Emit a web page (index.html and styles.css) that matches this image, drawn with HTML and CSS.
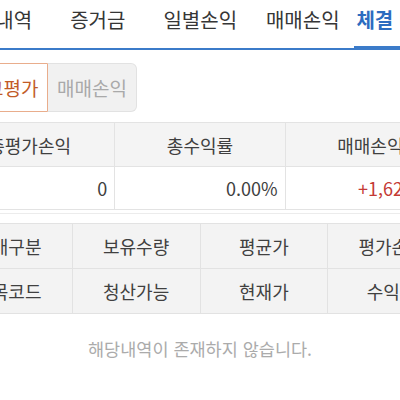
FILE: index.html
```html
<!DOCTYPE html>
<html lang="ko">
<head>
<meta charset="utf-8">
<link rel="stylesheet" href="styles.css">
</head>
<body>
<div class="page">
  <nav class="tabs">
    <div class="tab">잔고내역</div>
    <div class="tab">증거금</div>
    <div class="tab">일별손익</div>
    <div class="tab">매매손익</div>
    <div class="tab active">체결 미체결</div>
  </nav>
  <div class="seg">
    <div class="seg-btn on">잔고평가</div>
    <div class="seg-btn off">매매손익</div>
  </div>
  <div class="summary-wrap">
    <table class="summary">
      <tr class="head"><td>총평가손익</td><td>총수익률</td><td>매매손익</td></tr>
      <tr class="data"><td>0</td><td>0.00%</td><td class="plus">+1,620,000</td></tr>
    </table>
  </div>
  <table class="grid">
    <tr><td>매매구분</td><td>보유수량</td><td>평균가</td><td>평가손익</td></tr>
    <tr><td>종목코드</td><td>청산가능</td><td>현재가</td><td>수익률</td></tr>
  </table>
  <p class="empty">해당내역이 존재하지 않습니다.</p>
</div>
</body>
</html>
```
FILE: styles.css
```css
html, body {
  margin: 0;
  padding: 0;
  background: #fff;
  overflow: hidden;
}
body {
  font-family: "Noto Sans CJK KR", "Noto Sans", sans-serif;
  color: #444;
}
.page {
  width: 512px;
  margin-left: -56px;
}
.tabs {
  display: flex;
  height: 48px;
  border-bottom: 2px solid #3b7bc9;
}
.tab {
  flex: 0 0 102.5px;
  text-align: center;
  font-size: 20px;
  line-height: 24px;
  padding-top: 8px;
  color: #363636;
  white-space: nowrap;
  box-sizing: border-box;
}
.tab.active {
  color: #2c6cc0;
  font-weight: bold;
  border-bottom: 4px solid #3b7bc9;
  margin-bottom: -2px;
}
.seg {
  display: flex;
  padding-left: 15px;
  margin-top: 13px;
}
.seg-btn {
  width: 89px;
  height: 49px;
  box-sizing: border-box;
  font-size: 19px;
  line-height: 47px;
  text-align: center;
}
.seg-btn.on {
  border: 1px solid #e9ad8c;
  border-radius: 6px 0 0 6px;
  color: #c25b27;
  background: #fff;
}
.seg-btn.off {
  border: 1px solid #e2e2e2;
  border-left: none;
  border-radius: 0 6px 6px 0;
  background: #f1f1f1;
  color: #a9a9a9;
}
.summary-wrap {
  margin-top: 10px;
  padding-bottom: 3px;
  border-bottom: 1px solid #ececec;
}
table {
  width: 512px;
  border-collapse: collapse;
  table-layout: fixed;
}
td {
  padding: 0;
  font-size: 18px;
  color: #404040;
  white-space: nowrap;
  overflow: hidden;
}
.summary td {
  border: 1px solid #e3e3e3;
  border-left-color: #e8e8e8;
}
.summary .head td {
  height: 43px;
  background: #f4f4f4;
  text-align: center;
}
.summary .data td {
  height: 42px;
  text-align: right;
  padding-right: 7px;
  background: #fff;
}
.summary .data td.plus {
  color: #c43a35;
}
.grid {
  margin-top: 9px;
}
.grid td {
  height: 44px;
  background: #f3f3f3;
  border: 1px solid #e2e2e2;
  text-align: center;
}
.empty {
  margin: 23px 0 0;
  text-align: center;
  font-size: 17.5px;
  line-height: 24px;
  color: #ababab;
}
```
